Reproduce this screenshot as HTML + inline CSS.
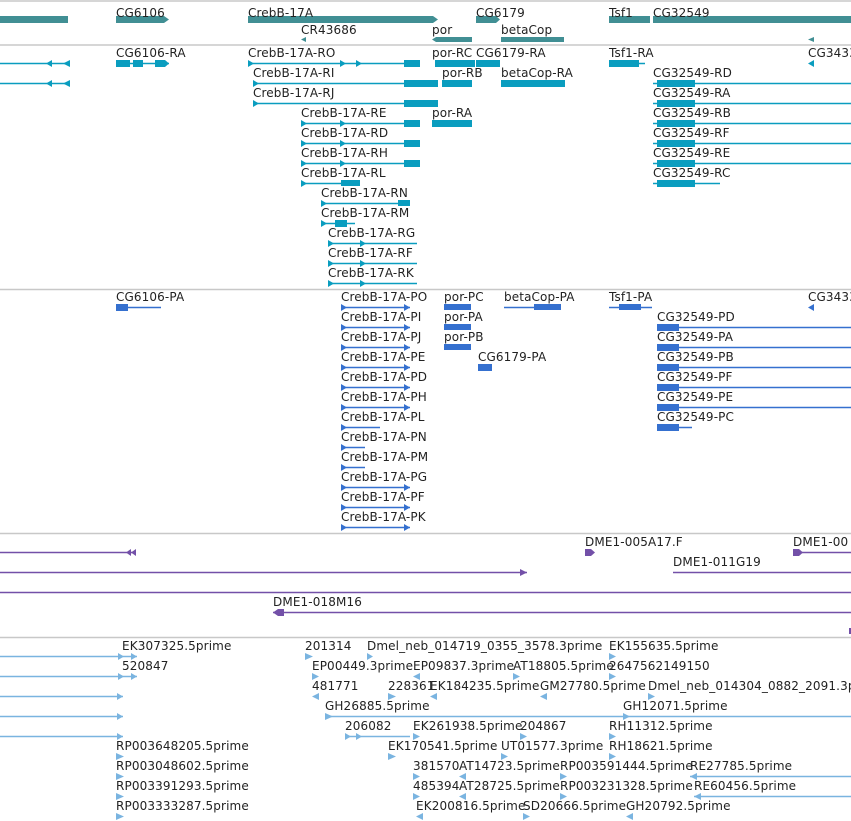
<!DOCTYPE html><html><head><style>body{margin:0;background:#fff}svg{display:block}text{font-family:"DejaVu Sans","Liberation Sans",sans-serif;font-size:12px;fill:#222;letter-spacing:0.12px}</style></head><body>
<svg width="851" height="821" xmlns="http://www.w3.org/2000/svg">
<g stroke="#c8c8c8" stroke-width="1.5"><line x1="0" y1="1" x2="851" y2="1"/><line x1="0" y1="45" x2="851" y2="45"/><line x1="0" y1="289.5" x2="851" y2="289.5"/><line x1="0" y1="533.5" x2="851" y2="533.5"/><line x1="0" y1="637.5" x2="851" y2="637.5"/></g>
<g fill="#418f94">
<rect x="0" y="16" width="68" height="7"/><polygon points="116,16 164,16 169,19.5 164,23 116,23"/><polygon points="248,16 433,16 438,19.5 433,23 248,23"/><polygon points="476,16 496,16 500,19.5 496,23 476,23"/><rect x="609" y="16" width="41" height="7"/><rect x="653" y="16" width="198" height="7"/>
<polygon points="301,39.5 306,37 306,42"/><polygon points="432,39.5 436,37 472,37 472,42 436,42"/><rect x="501" y="37" width="63" height="5"/><polygon points="808,39.5 814,37 814,42"/>
</g>
<text x="116" y="17">CG6106</text><text x="248" y="17">CrebB-17A</text><text x="476" y="17">CG6179</text><text x="609" y="17">Tsf1</text><text x="653" y="17">CG32549</text>
<text x="301" y="34">CR43686</text><text x="432" y="34">por</text><text x="501" y="34">betaCop</text>
<g stroke="#0a9dbf" stroke-width="1.5">
<line x1="0" y1="63.5" x2="70" y2="63.5"/><line x1="0" y1="83.5" x2="70" y2="83.5"/>
<line x1="116" y1="63.5" x2="169" y2="63.5"/><line x1="248" y1="63.5" x2="420" y2="63.5"/><line x1="609" y1="63.5" x2="645" y2="63.5"/>
<line x1="253" y1="83.5" x2="438" y2="83.5"/><line x1="253" y1="103.5" x2="438" y2="103.5"/>
<line x1="301" y1="123.5" x2="420" y2="123.5"/><line x1="301" y1="143.5" x2="420" y2="143.5"/><line x1="301" y1="163.5" x2="420" y2="163.5"/><line x1="301" y1="183.5" x2="360" y2="183.5"/>
<line x1="321" y1="203.5" x2="410" y2="203.5"/><line x1="321" y1="223.5" x2="355" y2="223.5"/><line x1="328" y1="243.5" x2="417" y2="243.5"/><line x1="328" y1="263.5" x2="417" y2="263.5"/><line x1="328" y1="283.5" x2="417" y2="283.5"/>
<line x1="653" y1="83.5" x2="851" y2="83.5"/><line x1="653" y1="103.5" x2="851" y2="103.5"/><line x1="653" y1="123.5" x2="851" y2="123.5"/><line x1="653" y1="143.5" x2="851" y2="143.5"/><line x1="653" y1="163.5" x2="851" y2="163.5"/><line x1="653" y1="183.5" x2="720" y2="183.5"/>
</g>
<g fill="#0a9dbf">
<polygon points="46,63.5 52,60 52,67"/><polygon points="63,63.5 70,60 70,67"/><polygon points="46,83.5 52,80 52,87"/><polygon points="63,83.5 70,80 70,87"/>
<rect x="116" y="60" width="14" height="7"/><rect x="133" y="60" width="10" height="7"/><polygon points="155,60 165,60 169,63.5 165,67 155,67"/>
<rect x="404" y="60" width="16" height="7"/><rect x="404" y="80" width="34" height="7"/><rect x="404" y="100" width="34" height="7"/>
<rect x="404" y="120" width="16" height="7"/><rect x="404" y="140" width="16" height="7"/><rect x="404" y="160" width="16" height="7"/><rect x="341" y="180" width="19" height="6"/>
<rect x="335" y="220" width="12" height="7"/><rect x="398" y="200" width="12" height="6"/>
<rect x="435" y="60" width="40" height="7"/><rect x="476" y="60" width="24" height="7"/><rect x="609" y="60" width="30" height="7"/><polygon points="808,63.5 814,60 814,67"/>
<rect x="442" y="80" width="30" height="7"/><rect x="501" y="80" width="64" height="7"/><rect x="432" y="120" width="40" height="7"/>
<rect x="657" y="80" width="38" height="7"/><rect x="657" y="100" width="38" height="7"/><rect x="657" y="120" width="38" height="7"/><rect x="657" y="140" width="38" height="7"/><rect x="657" y="160" width="38" height="7"/><rect x="657" y="180" width="38" height="7"/>
</g>
<g fill="#0a9dbf"><polygon points="248,60 254,63.5 248,67"/><polygon points="340,60 346,63.5 340,67"/><polygon points="356,60 362,63.5 356,67"/><polygon points="253,80 259,83.5 253,87"/><polygon points="253,100 259,103.5 253,107"/><polygon points="301,120 307,123.5 301,127"/><polygon points="301,140 307,143.5 301,147"/><polygon points="301,160 307,163.5 301,167"/><polygon points="301,180 307,183.5 301,187"/><polygon points="321,200 327,203.5 321,207"/><polygon points="321,220 327,223.5 321,227"/><polygon points="328,240 334,243.5 328,247"/><polygon points="328,260 334,263.5 328,267"/><polygon points="328,280 334,283.5 328,287"/><polygon points="340,120 346,123.5 340,127"/><polygon points="340,140 346,143.5 340,147"/><polygon points="340,160 346,163.5 340,167"/><polygon points="360,240 366,243.5 360,247"/><polygon points="360,260 366,263.5 360,267"/><polygon points="360,280 366,283.5 360,287"/></g>
<text x="116" y="57">CG6106-RA</text><text x="248" y="57">CrebB-17A-RO</text><text x="432" y="57">por-RC</text><text x="476" y="57">CG6179-RA</text><text x="609" y="57">Tsf1-RA</text><text x="808" y="57">CG3433</text>
<text x="253" y="77">CrebB-17A-RI</text><text x="442" y="77">por-RB</text><text x="501" y="77">betaCop-RA</text><text x="653" y="77">CG32549-RD</text>
<text x="253" y="97">CrebB-17A-RJ</text><text x="653" y="97">CG32549-RA</text>
<text x="301" y="117">CrebB-17A-RE</text><text x="432" y="117">por-RA</text><text x="653" y="117">CG32549-RB</text>
<text x="301" y="137">CrebB-17A-RD</text><text x="653" y="137">CG32549-RF</text>
<text x="301" y="157">CrebB-17A-RH</text><text x="653" y="157">CG32549-RE</text>
<text x="301" y="177">CrebB-17A-RL</text><text x="653" y="177">CG32549-RC</text>
<text x="321" y="197">CrebB-17A-RN</text><text x="321" y="217">CrebB-17A-RM</text><text x="328" y="237">CrebB-17A-RG</text><text x="328" y="257">CrebB-17A-RF</text><text x="328" y="277">CrebB-17A-RK</text>
<g stroke="#3570cf" stroke-width="1.5">
<line x1="116" y1="307.5" x2="161" y2="307.5"/><line x1="341" y1="307.5" x2="410" y2="307.5"/>
<line x1="341" y1="327.5" x2="410" y2="327.5"/><line x1="341" y1="347.5" x2="410" y2="347.5"/><line x1="341" y1="367.5" x2="410" y2="367.5"/><line x1="341" y1="387.5" x2="410" y2="387.5"/><line x1="341" y1="407.5" x2="410" y2="407.5"/><line x1="341" y1="427.5" x2="380" y2="427.5"/><line x1="341" y1="447.5" x2="365" y2="447.5"/><line x1="341" y1="467.5" x2="365" y2="467.5"/><line x1="341" y1="487.5" x2="410" y2="487.5"/><line x1="341" y1="507.5" x2="410" y2="507.5"/><line x1="341" y1="527.5" x2="410" y2="527.5"/>
<line x1="504" y1="307.5" x2="561" y2="307.5"/><line x1="609" y1="307.5" x2="652" y2="307.5"/>
<line x1="657" y1="327.5" x2="851" y2="327.5"/><line x1="657" y1="347.5" x2="851" y2="347.5"/><line x1="657" y1="367.5" x2="851" y2="367.5"/><line x1="657" y1="387.5" x2="851" y2="387.5"/><line x1="657" y1="407.5" x2="851" y2="407.5"/><line x1="657" y1="427.5" x2="692" y2="427.5"/>
</g>
<g fill="#3570cf">
<rect x="116" y="304" width="12" height="7"/><rect x="444" y="304" width="27" height="6"/><rect x="444" y="324" width="27" height="6"/><rect x="444" y="344" width="27" height="6"/><rect x="478" y="364" width="14" height="7"/><rect x="534" y="304" width="27" height="6"/><rect x="619" y="304" width="22" height="6"/><polygon points="808,307.5 814,304 814,311"/>
<rect x="657" y="324" width="22" height="7"/><rect x="657" y="344" width="22" height="7"/><rect x="657" y="364" width="22" height="7"/><rect x="657" y="384" width="22" height="7"/><rect x="657" y="404" width="22" height="7"/><rect x="657" y="424" width="22" height="7"/>
</g>
<g fill="#3570cf"><polygon points="341,304 347,307.5 341,311"/><polygon points="341,324 347,327.5 341,331"/><polygon points="341,344 347,347.5 341,351"/><polygon points="341,364 347,367.5 341,371"/><polygon points="341,384 347,387.5 341,391"/><polygon points="341,404 347,407.5 341,411"/><polygon points="341,424 347,427.5 341,431"/><polygon points="341,444 347,447.5 341,451"/><polygon points="341,464 347,467.5 341,471"/><polygon points="341,484 347,487.5 341,491"/><polygon points="341,504 347,507.5 341,511"/><polygon points="341,524 347,527.5 341,531"/><polygon points="404,304 410,307.5 404,311"/><polygon points="404,324 410,327.5 404,331"/><polygon points="404,344 410,347.5 404,351"/><polygon points="404,364 410,367.5 404,371"/><polygon points="404,384 410,387.5 404,391"/><polygon points="404,404 410,407.5 404,411"/><polygon points="404,484 410,487.5 404,491"/><polygon points="404,504 410,507.5 404,511"/><polygon points="404,524 410,527.5 404,531"/></g>
<text x="116" y="301">CG6106-PA</text><text x="341" y="301">CrebB-17A-PO</text><text x="444" y="301">por-PC</text><text x="504" y="301">betaCop-PA</text><text x="609" y="301">Tsf1-PA</text><text x="808" y="301">CG3433</text>
<text x="341" y="321">CrebB-17A-PI</text><text x="444" y="321">por-PA</text><text x="657" y="321">CG32549-PD</text>
<text x="341" y="341">CrebB-17A-PJ</text><text x="444" y="341">por-PB</text><text x="657" y="341">CG32549-PA</text>
<text x="341" y="361">CrebB-17A-PE</text><text x="478" y="361">CG6179-PA</text><text x="657" y="361">CG32549-PB</text>
<text x="341" y="381">CrebB-17A-PD</text><text x="657" y="381">CG32549-PF</text>
<text x="341" y="401">CrebB-17A-PH</text><text x="657" y="401">CG32549-PE</text>
<text x="341" y="421">CrebB-17A-PL</text><text x="657" y="421">CG32549-PC</text>
<text x="341" y="441">CrebB-17A-PN</text><text x="341" y="461">CrebB-17A-PM</text><text x="341" y="481">CrebB-17A-PG</text><text x="341" y="501">CrebB-17A-PF</text><text x="341" y="521">CrebB-17A-PK</text>
<g stroke="#7350a8" stroke-width="1.5"><line x1="0" y1="552.5" x2="135" y2="552.5"/><line x1="793" y1="552.5" x2="851" y2="552.5"/><line x1="0" y1="572.5" x2="527" y2="572.5"/><line x1="673" y1="572.5" x2="851" y2="572.5"/><line x1="0" y1="592.5" x2="851" y2="592.5"/><line x1="273" y1="612.5" x2="851" y2="612.5"/></g>
<g fill="#7350a8"><polygon points="126,552.5 131,549 131,556"/><polygon points="131,552.5 136,549 136,556"/><polygon points="585,549 591,549 595,552.5 591,556 585,556"/><polygon points="793,549 799,549 803,552.5 799,556 793,556"/><polygon points="527,572.5 520,569 520,576"/><polygon points="273,612.5 278,609 284,609 284,616 278,616"/><rect x="849" y="628" width="2" height="6"/></g>
<text x="585" y="546">DME1-005A17.F</text><text x="793" y="546">DME1-00</text><text x="673" y="566">DME1-011G19</text><text x="273" y="606">DME1-018M16</text>
<g stroke="#7ab4e0" stroke-width="1.5"><line x1="0" y1="656.5" x2="137" y2="656.5"/><line x1="0" y1="676.5" x2="137" y2="676.5"/><line x1="0" y1="696.5" x2="123" y2="696.5"/><line x1="0" y1="716.5" x2="123" y2="716.5"/><line x1="0" y1="736.5" x2="123" y2="736.5"/><line x1="325" y1="716.5" x2="851" y2="716.5"/><line x1="345" y1="736.5" x2="410" y2="736.5"/><line x1="690" y1="776.5" x2="851" y2="776.5"/><line x1="694" y1="796.5" x2="851" y2="796.5"/></g>
<g fill="#7ab4e0">
<polygon points="118,653 124,656.5 118,660"/><polygon points="131,653 137,656.5 131,660"/><polygon points="118,673 124,676.5 118,680"/><polygon points="131,673 137,676.5 131,680"/><polygon points="117,693 123,696.5 117,700"/><polygon points="117,713 123,716.5 117,720"/><polygon points="117,733 123,736.5 117,740"/>
<polygon points="116,753 124,756.5 116,760"/><polygon points="116,773 124,776.5 116,780"/><polygon points="116,793 124,796.5 116,800"/><polygon points="116,813 124,816.5 116,820"/>
<polygon points="305,653 313,656.5 305,660"/><polygon points="367,653 373,656.5 367,660"/><polygon points="312,673 319,676.5 312,680"/><polygon points="413,676.5 420,673 420,680"/><polygon points="312,696.5 319,693 319,700"/><polygon points="388,693 396,696.5 388,700"/><polygon points="430,696.5 437,693 437,700"/><polygon points="325,713 333,716.5 325,720"/><polygon points="345,733 351,736.5 345,740"/><polygon points="356,733 362,736.5 356,740"/><polygon points="413,733 420,736.5 413,740"/><polygon points="388,753 396,756.5 388,760"/><polygon points="413,773 420,776.5 413,780"/><polygon points="413,793 420,796.5 413,800"/><polygon points="416,816.5 423,813 423,820"/>
<polygon points="459,776.5 466,773 466,780"/><polygon points="459,796.5 466,793 466,800"/><polygon points="513,673 520,676.5 513,680"/><polygon points="540,696.5 547,693 547,700"/><polygon points="520,733 527,736.5 520,740"/><polygon points="501,753 508,756.5 501,760"/><polygon points="523,813 530,816.5 523,820"/><polygon points="560,773 567,776.5 560,780"/><polygon points="560,793 567,796.5 560,800"/>
<polygon points="609,653 616,656.5 609,660"/><polygon points="609,673 616,676.5 609,680"/><polygon points="648,693 655,696.5 648,700"/><polygon points="623,713 630,716.5 623,720"/><polygon points="609,733 616,736.5 609,740"/><polygon points="609,753 616,756.5 609,760"/><polygon points="626,816.5 633,813 633,820"/><polygon points="690,776.5 697,773 697,780"/><polygon points="694,796.5 701,793 701,800"/>
</g>
<text x="122" y="650">EK307325.5prime</text><text x="305" y="650">201314</text><text x="367" y="650">Dmel_neb_014719_0355_3578.3prime</text><text x="609" y="650">EK155635.5prime</text>
<text x="122" y="670">520847</text><text x="312" y="670">EP00449.3prime</text><text x="413" y="670">EP09837.3prime</text><text x="513" y="670">AT18805.5prime</text><text x="609" y="670">2647562149150</text>
<text x="312" y="690">481771</text><text x="388" y="690">228361</text><text x="430" y="690">EK184235.5prime</text><text x="540" y="690">GM27780.5prime</text><text x="648" y="690">Dmel_neb_014304_0882_2091.3p</text>
<text x="325" y="710">GH26885.5prime</text><text x="623" y="710">GH12071.5prime</text>
<text x="345" y="730">206082</text><text x="413" y="730">EK261938.5prime</text><text x="520" y="730">204867</text><text x="609" y="730">RH11312.5prime</text>
<text x="116" y="750">RP003648205.5prime</text><text x="388" y="750">EK170541.5prime</text><text x="501" y="750">UT01577.3prime</text><text x="609" y="750">RH18621.5prime</text>
<text x="116" y="770">RP003048602.5prime</text><text x="413" y="770">381570</text><text x="459" y="770">AT14723.5prime</text><text x="560" y="770">RP003591444.5prime</text><text x="690" y="770">RE27785.5prime</text>
<text x="116" y="790">RP003391293.5prime</text><text x="413" y="790">485394</text><text x="459" y="790">AT28725.5prime</text><text x="560" y="790">RP003231328.5prime</text><text x="694" y="790">RE60456.5prime</text>
<text x="116" y="810">RP003333287.5prime</text><text x="416" y="810">EK200816.5prime</text><text x="523" y="810">SD20666.5prime</text><text x="626" y="810">GH20792.5prime</text>
</svg></body></html>
